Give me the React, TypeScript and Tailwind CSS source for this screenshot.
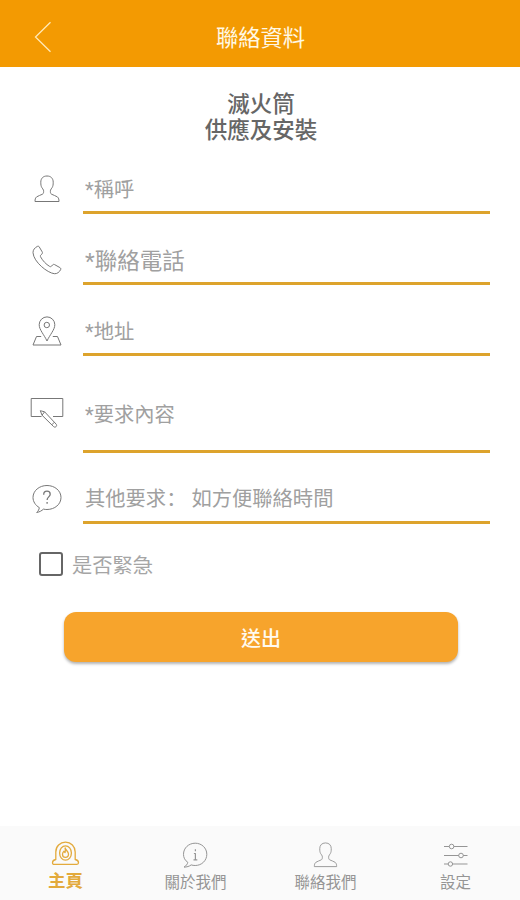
import { useState } from "react";
import type { ReactNode } from "react";
import clsx from "clsx";

interface IconProps {
  className?: string;
}

const PersonIcon = ({ className }: IconProps) => (
  <svg viewBox="0 0 26 28" fill="none" stroke="currentColor" strokeLinejoin="round" className={className}>
    <path d="M13 1C9 1 6.800 3.500 6.800 7.200c0 2.600.2 3.800 1 5.300.5 1 1.500 1.700 1.700 2.700.3 1.900.1 3.300-1 4-1.600 1-4.400 1.500-5.900 2.700C1.300 23 1 24.500 1 26.500h24c0-2-.3-3.500-1.600-4.600-1.500-1.200-4.300-1.700-5.900-2.700-1.100-.7-1.300-2.100-1-4 .2-1 1.200-1.700 1.700-2.700.8-1.500 1-2.700 1-5.300C19.200 3.500 17 1 13 1z" />
  </svg>
);

const PhoneIcon = () => (
  <svg viewBox="0 0 30 30" fill="none" stroke="currentColor" strokeLinejoin="round" className="w-[30px] h-[30px]">
    <path d="M5.200 1.500C6.100.9 6.800 1.100 7.300 2l2.900 4.900c.5.900.3 1.500-.3 2.100l-1 .9c-.6.600-.6 1.200-.3 2 2.200 4 5.400 7.300 9 9.500.8.400 1.400.4 1.900-.2l1.100-1.300c.6-.6 1.200-.7 2-.3l5.300 3c.9.500 1.100 1.200.7 2.100-1.200 2.400-3.500 4.300-6.300 4C15.600 28 1.600 17 1 7.700.9 4.900 2.800 2.700 5.200 1.500z" />
  </svg>
);

const PinIcon = () => (
  <svg viewBox="0 0 30 30" fill="none" stroke="currentColor" strokeLinejoin="round" className="w-[30px] h-[30px]">
    <path d="M15 25C12 18.500 7.200 13.800 7.200 8.700a7.800 7.800 0 0 1 15.600 0c0 5.100-4.800 9.800-7.800 16.300z" />
    <circle cx="14.800" cy="9" r="2.700" />
    <path d="M9.200 20.500H4.500L1 29h28l-3.500-8.500h-4.700" />
  </svg>
);

const BoardIcon = () => (
  <svg viewBox="0 0 34 32" fill="none" stroke="currentColor" strokeLinejoin="round" className="w-[34px] h-[32px]">
    <path d="M11.500 19.500H1.200v-18h31.600v18H23" />
    <path d="M10.300 13.700l4.300 1.100 11.600 12.400c.6.800.6 1.700-.1 2.400s-1.700.7-2.500 0L12 18.200zM12 18.200l2.600-3.400M21.800 27.800l2.600-2.600" />
  </svg>
);

const QuestionIcon = () => (
  <svg viewBox="0 0 30 30" fill="none" stroke="currentColor" strokeLinejoin="round" className="w-[30px] h-[30px]">
    <path d="M7.300 23.600C3.500 21.400 1 17.600 1 13.500 1 6.700 7.300 1.500 15 1.500s14 5.200 14 12-6.300 12-14 12c-1.200 0-2.400-.1-3.500-.4-2 1.800-4 2.900-6.800 3.400 1.600-1.500 2.500-3.200 2.600-4.900z" />
    <path strokeWidth="1.300" d="M11.700 10.700c0-2.200 1.300-3.500 3.300-3.500s3.200 1.200 3.200 3c0 2.600-3.100 2.800-3.100 5.800M15.100 18v1.700" />
  </svg>
);

const InfoIcon = () => (
  <svg viewBox="0 0 26 26" fill="none" stroke="currentColor" strokeLinejoin="round" className="w-[26px] h-[26px]">
    <path d="M5.800 20.300C2.900 18.500 1.500 15.500 1.500 12.300 1.500 6 6.700 1.200 13.200 1.200S24.800 6 24.800 12.300s-5.100 11.200-11.600 11.200c-1.500 0-2.800-.2-4-.6-1.900 1.400-4.300 2.200-7.200 2.200 2-1.200 3.500-2.900 3.800-4.800z" />
    <path strokeWidth="1.200" d="M13.400 7.300v1.900M11.900 11.500h1.500v6.200M11.500 17.800h3.800" />
  </svg>
);

const AlarmIcon = () => (
  <svg viewBox="0 0 28 25" fill="none" stroke="currentColor" strokeWidth="1.300" strokeLinejoin="round" className="w-[29px] h-[25px]">
    <path d="M4.300 18.500V11C4.300 5.300 8.500 1.200 14 1.200s9.700 4.100 9.700 9.800v7.500c1.800.3 3.300 1.500 3.300 3.300 0 1-.6 1.500-1.600 1.500H2.600c-1 0-1.600-.5-1.600-1.500 0-1.800 1.500-3 3.300-3.300z" />
    <ellipse cx="14" cy="12" rx="5.900" ry="7.200" />
    <path d="M13.600 7c.6 2.200 3.400 3.500 3.400 6.100 0 2-1.300 3.300-3 3.300s-3-1.300-3-3.200c0-1.400.8-2.100 1.400-2.900.3.700.6 1.100 1.200 1.300.5-1.400.5-2.900 0-4.600z" />
  </svg>
);

const SlidersIcon = () => (
  <svg viewBox="0 0 26 26" fill="none" stroke="currentColor" className="w-[26px] h-[26px] ml-[2px]">
    <path d="M1 4.500h5.300M10.700 4.500h13.800M1 13.500h14.800M20.200 13.500h4.300M1 22h4M9.700 22h14.800" />
    <circle cx="8.600" cy="4.500" r="2.300" />
    <circle cx="18" cy="13.500" r="2.300" />
    <circle cx="7.400" cy="22" r="2.200" />
  </svg>
);

interface Field {
  name: string;
  placeholder: string;
  icon: ReactNode;
  row: string;
  input: string;
}

const fields: Field[] = [
  {
    name: "name",
    placeholder: "*稱呼",
    icon: <PersonIcon className="w-[26px] h-[28px]" />,
    row: "h-[51px]",
    input: "text-[20.300px] pt-[7px]",
  },
  {
    name: "phone",
    placeholder: "*聯絡電話",
    icon: <PhoneIcon />,
    row: "h-[51px] mt-5",
    input: "text-[22.500px] pt-[7px]",
  },
  {
    name: "address",
    placeholder: "*地址",
    icon: <PinIcon />,
    row: "h-[51px] mt-5",
    input: "text-[20.300px] pt-[6px]",
  },
  {
    name: "content",
    placeholder: "*要求內容",
    icon: <BoardIcon />,
    row: "h-[77px] mt-5 [&>div]:pb-[4px]",
    input: "text-[20.300px] pt-[5px]",
  },
  {
    name: "other",
    placeholder: "其他要求： 如方便聯絡時間",
    icon: <QuestionIcon />,
    row: "h-[51px] mt-5",
    input: "text-[20.300px] pt-[5px]",
  },
];

const tabs = [
  { label: "主頁", icon: <AlarmIcon /> },
  { label: "關於我們", icon: <InfoIcon /> },
  { label: "聯絡我們", icon: <PersonIcon className="w-[25px] h-[26px]" /> },
  { label: "設定", icon: <SlidersIcon /> },
];

const App = () => {
  const [urgent, setUrgent] = useState(false);
  const [active, setActive] = useState(0);

  return (
    <div className="w-[520px] h-[900px] flex flex-col bg-white overflow-hidden font-['Noto_Sans_CJK_TC','Noto_Sans',sans-serif]">
      <header className="h-[67px] shrink-0 grid grid-cols-[85px_1fr_85px] items-center bg-[#f39a02] pt-[6px]">
        <button className="flex justify-center text-[#ffe9b8]">
          <svg viewBox="0 0 18 32" fill="none" stroke="currentColor" strokeWidth="1.300" className="w-[18px] h-[32px]">
            <path d="M16.500 1.200L1.500 16l15 14.800" />
          </svg>
        </button>
        <h1 className="text-center text-[22.300px] leading-[30px] pb-[2px] pl-[1px] font-normal text-[#fff8e4]">聯絡資料</h1>
      </header>

      <main className="flex-1 pt-[22px]">
        <h2 className="text-center text-[22.500px] leading-[26px] pl-[2px] font-medium text-[#666666]">
          滅火筒
          <br />
          供應及安裝
        </h2>

        <form className="mt-[22px]" onSubmit={(e) => e.preventDefault()}>
          {fields.map((field) => (
            <div key={field.name} className={clsx("flex pr-[30px]", field.row)}>
              <div className="w-[83px] pl-[10px] flex items-center justify-center text-[#777777]">
                {field.icon}
              </div>
              <input
                name={field.name}
                placeholder={field.placeholder}
                className={clsx(
                  "flex-1 min-w-0 pl-[2px] border-b-[3px] border-[#dda32c] text-[#555555] placeholder:text-[#a0a0a0] outline-none font-['Roboto','Noto_Sans_CJK_SC',sans-serif]",
                  field.input
                )}
              />
            </div>
          ))}

          <label className="mt-[25px] ml-[39px] h-[30px] flex items-center gap-[9px]">
            <input
              type="checkbox"
              checked={urgent}
              onChange={(e) => setUrgent(e.target.checked)}
              className="appearance-none w-6 h-6 border-2 border-[#666666] rounded-[3px] checked:bg-[#f7a42c]"
            />
            <span className="text-[20.300px] leading-[30px] pb-[1px] text-[#a5a5a5]">是否緊急</span>
          </label>

          <button
            type="submit"
            className="block mt-[33px] ml-[64px] w-[394px] h-[50px] rounded-xl bg-[#f7a42c] text-[20px] pt-[1px] font-medium text-[#fffaf0] shadow-[0_2px_3px_rgba(0,0,0,0.3)]"
          >
            送出
          </button>
        </form>
      </main>

      <nav className="h-[74px] shrink-0 grid grid-cols-4 bg-[#fafafa]">
        {tabs.map((tab, idx) => (
          <button
            key={tab.label}
            onClick={() => setActive(idx)}
            className={clsx(
              "flex flex-col items-center",
              active === idx ? "pt-[14px] text-[#e3aa3c]" : "pt-[15px] text-[#959595]"
            )}
          >
            <span className="h-[27px] flex items-center">{tab.icon}</span>
            <span
              className={clsx(
                "leading-[26px]",
                active === idx ? "text-[17.500px] pl-[1px] font-bold" : "text-[15.500px] pl-[1px]"
              )}
            >
              {tab.label}
            </span>
          </button>
        ))}
      </nav>
    </div>
  );
};

export default App;
